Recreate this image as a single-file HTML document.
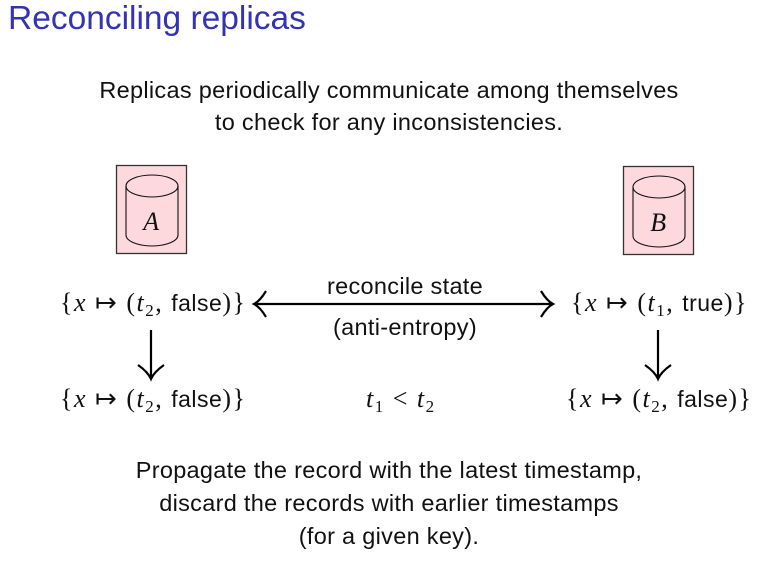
<!DOCTYPE html><html><head><meta charset="utf-8"><style>
body{margin:0;width:778px;height:570px;background:#fff;position:relative;overflow:hidden;font-family:"Liberation Sans",sans-serif;color:#111}
.t{position:absolute;white-space:nowrap;font-size:23.5px;letter-spacing:0.3px}
.c{left:0;width:778px;text-align:center}
.m{font-family:"Liberation Serif",serif;font-size:26px;letter-spacing:1.5px}
.m i{font-style:italic}
.m sub{font-size:17px;vertical-align:-5px;line-height:0}
.m .s{font-family:"Liberation Sans",sans-serif;font-size:23px;letter-spacing:0.5px}
</style></head><body>
<div class="t" style="left:8px;top:0px;font-size:33.5px;color:#3333b3;letter-spacing:0">Reconciling replicas</div>
<div class="t c" style="top:77px">Replicas periodically communicate among themselves</div>
<div class="t c" style="top:109px">to check for any inconsistencies.</div>
<svg width="778" height="570" style="position:absolute;left:0;top:0">
<g stroke="#333" stroke-width="1.3" fill="#fdd9dd"><rect x="116.5" y="165.5" width="70" height="88"/><rect x="623.5" y="166.5" width="70" height="88"/></g>
<g stroke="#111" stroke-width="1.1" fill="none">
<ellipse cx="152" cy="186" rx="26" ry="11"/><path d="M126 186V235A26 11 0 0 0 178 235V186"/>
<ellipse cx="659" cy="187" rx="26" ry="11"/><path d="M633 187V236A26 11 0 0 0 685 236V187"/>
</g>
<g stroke="#000" stroke-width="2.2" fill="none">
<path d="M254 304H553M266 291Q260 301 254 304Q260 307 266 317M541 291Q547 301 553 304Q547 307 541 317"/>
<path d="M151 330V378M138 365Q148 372 151 379Q154 372 164 365"/>
<path d="M658 330V378M645 365Q655 372 658 379Q661 372 671 365"/>
</g>
</svg>
<div class="t m" style="left:152px;top:207px;transform:translateX(-50%)"><i>A</i></div>
<div class="t m" style="left:659px;top:208px;transform:translateX(-50%)"><i>B</i></div>
<div class="t m" style="left:60px;top:288px">{<i>x</i> ↦ (<i>t</i><sub>2</sub>, <span class="s">false</span>)}</div>
<div class="t m" style="left:571px;top:288px">{<i>x</i> ↦ (<i>t</i><sub>1</sub>, <span class="s">true</span>)}</div>
<div class="t m" style="left:60px;top:384px">{<i>x</i> ↦ (<i>t</i><sub>2</sub>, <span class="s">false</span>)}</div>
<div class="t m" style="left:566px;top:384px">{<i>x</i> ↦ (<i>t</i><sub>2</sub>, <span class="s">false</span>)}</div>
<div class="t m" style="left:366px;top:384px"><i>t</i><sub>1</sub> &lt; <i>t</i><sub>2</sub></div>
<div class="t" style="left:405px;top:273px;transform:translateX(-50%)">reconcile state</div>
<div class="t" style="left:405px;top:314px;transform:translateX(-50%)">(anti-entropy)</div>
<div class="t c" style="top:457px">Propagate the record with the latest timestamp,</div>
<div class="t c" style="top:490px">discard the records with earlier timestamps</div>
<div class="t c" style="top:523px">(for a given key).</div>
</body></html>
